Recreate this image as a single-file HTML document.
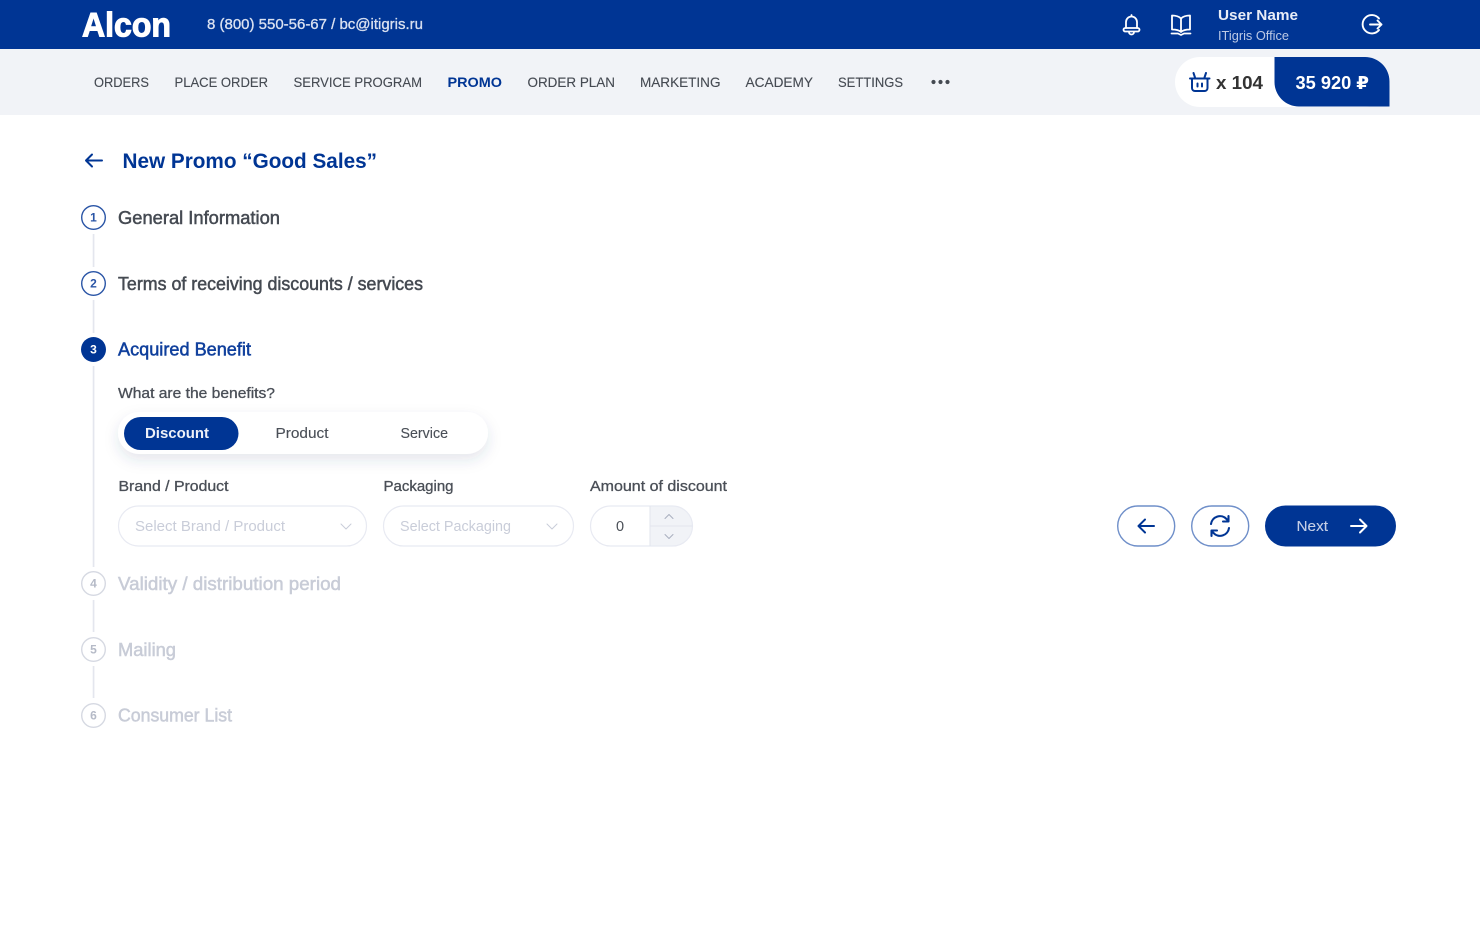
<!DOCTYPE html>
<html lang="en"><head><meta charset="utf-8"><title>New Promo</title>
<style>
html,body{margin:0;padding:0;background:#fff;width:1480px;height:938px;overflow:hidden}
svg{display:block;position:absolute;left:0;top:0}
text{font-family:"Liberation Sans","DejaVu Sans",sans-serif;white-space:pre}
.nav{font-size:14px;fill:#454a52;stroke:#454a52;stroke-width:.12}
.step{font-size:18px;stroke-width:.5}
.d{fill:#454a52;stroke:#454a52}
.off{fill:#c8ccd7;stroke:#c8ccd7}
.num{font-size:12px;font-weight:bold;text-anchor:middle}
.lab{font-size:14.500px;fill:#4a4f57;stroke:#4a4f57;stroke-width:.3}
.ph{font-size:14.500px;fill:#c9cdd9}
.ic{fill:none;stroke-linecap:round;stroke-linejoin:round}
</style></head><body>
<svg width="1480" height="938" viewBox="0 0 1480 938" xmlns="http://www.w3.org/2000/svg">
<rect width="1480" height="938" fill="#fff"/>
<rect width="1480" height="49" fill="#003594"/>
<rect y="49" width="1480" height="66" fill="#f1f3f7"/>

<text x="82" y="36.500" font-size="34" font-weight="bold" fill="#fff" stroke="#fff" stroke-width="1.100" textLength="89" lengthAdjust="spacingAndGlyphs">Alcon</text>
<text x="207" y="29" font-size="14.500" fill="#dbe2f1" stroke="#dbe2f1" stroke-width=".3" textLength="216" lengthAdjust="spacingAndGlyphs">8 (800) 550-56-67 / bc@itigris.ru</text>

<g class="ic" stroke="#fff" stroke-width="1.800">
<path d="M1126 28v-6a5.500 5.500 0 0 1 11 0v6M1131.500 16.500v-1.500M1129 32a2.500 2.500 0 0 0 5 0"/>
<rect x="1123.500" y="28" width="16" height="3.500" rx="1.700"/>
<path d="M1181 18.500c-2-2-5-3-9-3v14c4 0 7 .6 9 2.500 2-1.900 5-2.500 9-2.500v-14c-4 0-7 1-9 3zM1181 18.500v13.500M1171.500 33.500h6.500l3 1.500 3-1.500h6.500"/>
<path d="M1379 18.500a9.200 9.200 0 1 0 0 11.500M1370 24.500h11.500M1377.500 20.500l4 4-4 4" stroke-width="1.900"/>
</g>
<text x="1218" y="20" font-size="14.500" font-weight="bold" fill="#e8edf7" textLength="80" lengthAdjust="spacingAndGlyphs">User Name</text>
<text x="1218" y="40" font-size="12.500" fill="#bcc9e5" textLength="71" lengthAdjust="spacingAndGlyphs">ITigris Office</text>

<text class="nav" x="94" y="87" textLength="55" lengthAdjust="spacingAndGlyphs">ORDERS</text>
<text class="nav" x="174.500" y="87" textLength="93.500" lengthAdjust="spacingAndGlyphs">PLACE ORDER</text>
<text class="nav" x="293.500" y="87" textLength="128.500" lengthAdjust="spacingAndGlyphs">SERVICE PROGRAM</text>
<text x="447.500" y="87" font-size="14" font-weight="bold" fill="#003594" textLength="54.500" lengthAdjust="spacingAndGlyphs">PROMO</text>
<text class="nav" x="527.500" y="87" textLength="87.500" lengthAdjust="spacingAndGlyphs">ORDER PLAN</text>
<text class="nav" x="640" y="87" textLength="80.500" lengthAdjust="spacingAndGlyphs">MARKETING</text>
<text class="nav" x="745.500" y="87" textLength="67.500" lengthAdjust="spacingAndGlyphs">ACADEMY</text>
<text class="nav" x="838" y="87" textLength="65" lengthAdjust="spacingAndGlyphs">SETTINGS</text>
<g fill="#454a52"><circle cx="933.500" cy="82" r="2.100"/><circle cx="940.500" cy="82" r="2.100"/><circle cx="947.500" cy="82" r="2.100"/></g>

<rect x="1175" y="57" width="215" height="50" rx="25" fill="#fff"/>
<path d="M1274.500 57H1365a24.500 24.500 0 0 1 24.500 24.500V106.500H1299a24.500 24.500 0 0 1-24.500-24.500z" fill="#003594"/>
<g class="ic" stroke="#003594" stroke-width="2">
<path d="M1190 78.500h19.500M1192 79v9a3 3 0 0 0 3 3h9.500a3 3 0 0 0 3-3v-9M1195 77.500l-1.500-4.500M1204.500 77.500l1.500-4.500M1197.500 83.500v3M1202 83.500v3"/>
</g>
<text x="1216" y="89" font-size="18" font-weight="bold" fill="#333" textLength="47" lengthAdjust="spacingAndGlyphs">x 104</text>
<text x="1295.500" y="89" font-size="18" font-weight="bold" fill="#fff" textLength="73.500" lengthAdjust="spacingAndGlyphs">35 920 ₽</text>

<g class="ic" stroke="#003594" stroke-width="2"><path d="M102 160.500H86M92 154.500l-6 6 6 6"/></g>
<text x="122.500" y="168" font-size="21" font-weight="bold" fill="#003594" textLength="254.500" lengthAdjust="spacingAndGlyphs">New Promo “Good Sales”</text>

<g fill="#e4e6ee">
<rect x="92.700" y="234" width="1.700" height="33"/>
<rect x="92.700" y="300" width="1.700" height="33"/>
<rect x="92.700" y="366" width="1.700" height="201"/>
<rect x="92.700" y="600" width="1.700" height="32"/>
<rect x="92.700" y="666" width="1.700" height="32"/>
</g>

<g fill="#fff" stroke="#2a55a6" stroke-width="1.400">
<circle cx="93.500" cy="217.500" r="11.800"/><circle cx="93.500" cy="283.500" r="11.800"/>
</g>
<circle cx="93.500" cy="349.500" r="12.500" fill="#003594"/>
<g fill="#fff" stroke="#d6d9e2" stroke-width="1.400">
<circle cx="93.500" cy="583.500" r="11.800"/><circle cx="93.500" cy="649.500" r="11.800"/><circle cx="93.500" cy="715.500" r="11.800"/>
</g>
<text class="num" x="93.500" y="221.500" fill="#2a55a6">1</text>
<text class="num" x="93.500" y="287.500" fill="#2a55a6">2</text>
<text class="num" x="93.500" y="353.500" fill="#fff">3</text>
<text class="num" x="93.500" y="587.500" fill="#b5bac7">4</text>
<text class="num" x="93.500" y="653.500" fill="#b5bac7">5</text>
<text class="num" x="93.500" y="719.500" fill="#b5bac7">6</text>

<text class="step d" x="118" y="224" textLength="162" lengthAdjust="spacingAndGlyphs">General Information</text>
<text class="step d" x="118" y="290" textLength="305" lengthAdjust="spacingAndGlyphs">Terms of receiving discounts / services</text>
<text class="step" x="118" y="355.500" fill="#0f3f9c" stroke="#0f3f9c" textLength="133" lengthAdjust="spacingAndGlyphs">Acquired Benefit</text>
<text class="step off" x="118" y="590" textLength="223" lengthAdjust="spacingAndGlyphs">Validity / distribution period</text>
<text class="step off" x="118" y="656" textLength="58" lengthAdjust="spacingAndGlyphs">Mailing</text>
<text class="step off" x="118" y="721.500" textLength="114" lengthAdjust="spacingAndGlyphs">Consumer List</text>

<text class="lab" x="118" y="398" textLength="157" lengthAdjust="spacingAndGlyphs">What are the benefits?</text>

<defs><filter id="s" x="-10%" y="-50%" width="120%" height="220%"><feDropShadow dx="0" dy="6" stdDeviation="7" flood-color="#3a4a70" flood-opacity=".13"/></filter></defs>
<rect x="118" y="412" width="370" height="42" rx="21" fill="#fff" filter="url(#s)"/>
<rect x="124" y="417" width="114.500" height="33" rx="16.500" fill="#003594"/>
<text x="145" y="438" font-size="14.500" font-weight="bold" fill="#eef1f8" textLength="64" lengthAdjust="spacingAndGlyphs">Discount</text>
<text x="275.500" y="438" font-size="14.500" fill="#4a4f57" stroke="#4a4f57" stroke-width=".12" textLength="53" lengthAdjust="spacingAndGlyphs">Product</text>
<text x="400.500" y="438" font-size="14.500" fill="#4a4f57" stroke="#4a4f57" stroke-width=".12" textLength="47.500" lengthAdjust="spacingAndGlyphs">Service</text>

<text class="lab" x="118.500" y="491" textLength="110" lengthAdjust="spacingAndGlyphs">Brand / Product</text>
<text class="lab" x="383.500" y="491" textLength="70" lengthAdjust="spacingAndGlyphs">Packaging</text>
<text class="lab" x="590" y="491" textLength="137" lengthAdjust="spacingAndGlyphs">Amount of discount</text>

<g fill="#fff" stroke="#e8eaf2" stroke-width="1.200">
<rect x="118.500" y="506" width="248" height="40" rx="20"/>
<rect x="383.500" y="506" width="190" height="40" rx="20"/>
</g>
<text class="ph" x="135" y="531" textLength="150" lengthAdjust="spacingAndGlyphs">Select Brand / Product</text>
<text class="ph" x="400" y="531" textLength="111" lengthAdjust="spacingAndGlyphs">Select Packaging</text>
<g class="ic" stroke="#c9cdd9" stroke-width="1"><path d="M341 524l5 5 5-5M547 524l5 5 5-5"/></g>

<path d="M650 506h22.500a20 20 0 0 1 0 40H650z" fill="#f1f3f7"/>
<rect x="590.500" y="506" width="102" height="40" rx="20" fill="none" stroke="#e8eaf2" stroke-width="1.200"/>
<path d="M650 506v40M650 526h42.500" stroke="#e2e5ee" stroke-width="1" fill="none"/>
<text x="620" y="531" font-size="14.500" fill="#4a4f57" text-anchor="middle">0</text>
<g class="ic" stroke="#a9afbf" stroke-width="1"><path d="M665 518.500l4-4 4 4M665 534.500l4 4 4-4"/></g>

<g fill="#fff" stroke="#6f8fc9" stroke-width="1.400">
<rect x="1117.700" y="506" width="57" height="40" rx="20"/>
<rect x="1191.700" y="506" width="57" height="40" rx="20"/>
</g>
<rect x="1265" y="505.500" width="131" height="41" rx="20.500" fill="#003594"/>
<g class="ic" stroke="#003594" stroke-width="2">
<path d="M1154 526h-15.500M1145 519.500l-6.500 6.500 6.500 6.500"/>
<path d="M1211 524a9 9 0 0 1 15.500-5l2 2M1228.500 516v5.500h-5.500M1229 528a9 9 0 0 1-15.500 5l-2-2M1211.500 536v-5.500h5.500" stroke-width="2.100"/>
</g>
<text x="1296.500" y="531" font-size="14.500" fill="#c5cfe6" stroke="#c5cfe6" stroke-width=".12" textLength="31.500" lengthAdjust="spacingAndGlyphs">Next</text>
<g class="ic" stroke="#fff" stroke-width="2"><path d="M1351 526h15.500M1360 519.500l6.500 6.500-6.500 6.500"/></g>
</svg>
</body></html>
